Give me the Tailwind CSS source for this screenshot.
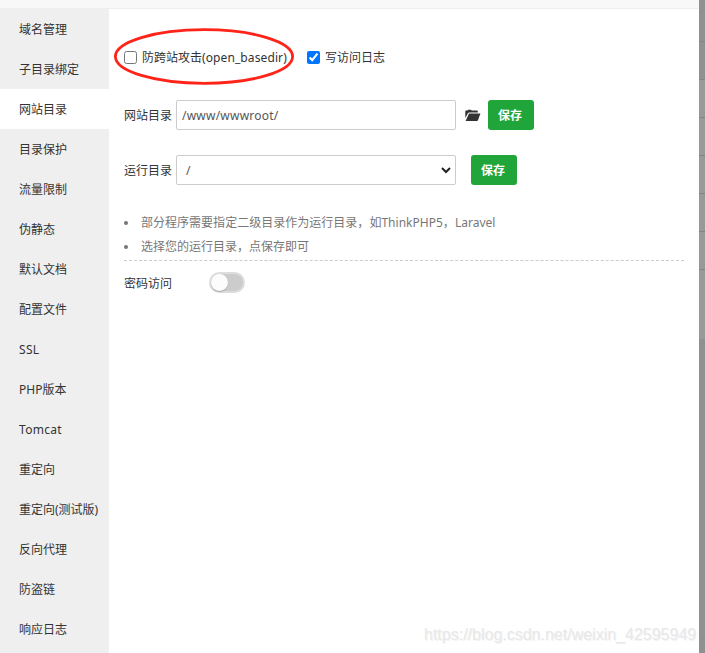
<!DOCTYPE html>
<html lang="zh-CN">
<head>
<meta charset="utf-8">
<title>网站目录</title>
<script src="https://cdn.jsdelivr.net/npm/@tailwindcss/browser@4"></script>
</head>
<body class="relative flex h-[653px] w-[705px] overflow-hidden bg-white font-['Noto_Sans','Noto_Sans_CJK_SC',sans-serif] text-xs text-[#333]">
<div class="flex h-full w-[699px] flex-col">
  <header class="h-[9px] shrink-0 border-b border-[#eee] bg-[#f8f8f8]"></header>
  <div class="flex min-h-0 flex-1">
    <nav class="w-[109px] shrink-0 bg-[#efefef] leading-[42px] whitespace-nowrap">
      <p class="h-10 pl-[19px]">域名管理</p>
      <p class="h-10 pl-[19px]">子目录绑定</p>
      <p class="h-10 bg-white pl-[19px]">网站目录</p>
      <p class="h-10 pl-[19px]">目录保护</p>
      <p class="h-10 pl-[19px]">流量限制</p>
      <p class="h-10 pl-[19px]">伪静态</p>
      <p class="h-10 pl-[19px]">默认文档</p>
      <p class="h-10 pl-[19px]">配置文件</p>
      <p class="h-10 pl-[19px] tracking-[0.3px]">SSL</p>
      <p class="h-10 pl-[19px]">PHP版本</p>
      <p class="h-10 pl-[19px] tracking-[0.3px]">Tomcat</p>
      <p class="h-10 pl-[19px]">重定向</p>
      <p class="h-10 pl-[19px]">重定向(测试版)</p>
      <p class="h-10 pl-[19px]">反向代理</p>
      <p class="h-10 pl-[19px]">防盗链</p>
      <p class="h-10 pl-[19px]">响应日志</p>
    </nav>
    <main class="flex-1 pt-[33px] pr-[15px] pl-[15px]">
      <div class="flex h-[30px] items-center whitespace-nowrap">
        <label class="flex w-[183px] items-center gap-[5px]"><input type="checkbox" class="h-[13px] w-[13px]"><span class="pt-[2px]">防跨站攻击<span class="tracking-[0.1px]">(open_basedir)</span></span></label>
        <label class="flex items-center gap-[5px]"><input type="checkbox" checked class="h-[13px] w-[13px]"><span class="pt-[2px]">写访问日志</span></label>
      </div>
      <div class="mt-7 flex h-[30px] items-center">
        <span class="w-[52px] pt-[2px]">网站目录</span>
        <div class="h-[30px] w-[280px] rounded-[2px] border border-[#ccc] pl-[5px] leading-[30px] tracking-[0.22px] text-[#555]">/www/wwwroot/</div>
        <svg class="ml-[9px] h-[13px] w-4" viewBox="0 0 16 13" fill="#333"><path d="M0.3 9V2.2Q0.3 1.5 1 1.5H2.5L3 0.8H6L6.6 1.5H12Q12.8 1.5 12.8 2.5V3.4H4.2Q3.3 3.4 2.9 4.2Z"/><path d="M4 4.6H15.4L13 11.3Q12.7 12 11.8 12H0.6Z"/></svg>
        <button class="ml-[7px] h-[30px] w-[46px] rounded-[3px] bg-[#20a53a] pt-[2px] pr-[2px] font-bold text-white">保存</button>
      </div>
      <div class="mt-[25px] flex h-[30px] items-center">
        <span class="w-[52px] pt-[2px]">运行目录</span>
        <div class="flex h-[30px] w-[280px] items-center justify-between rounded-[2px] border border-[#ccc] pr-[4px] pl-[9px] text-[#555]"><span class="pt-[2px]">/</span><svg class="h-[7px] w-[10px]" viewBox="0 0 10 7" fill="none" stroke="#222" stroke-width="2"><path d="M1 1L5 5L9 1"/></svg></div>
        <button class="ml-[15px] h-[30px] w-[46px] rounded-[3px] bg-[#20a53a] pt-[2px] pr-[2px] font-bold text-white">保存</button>
      </div>
      <ul class="mt-[25px] h-[51px] border-b border-dashed border-[#ccc] text-[#777]">
        <li class="flex h-6 items-center"><i class="mt-px mr-[13px] h-1 w-1 rounded-full bg-[#777]"></i><span class="pt-[2px] tracking-[0.02px]">部分程序需要指定二级目录作为运行目录，如ThinkPHP5，Laravel</span></li>
        <li class="flex h-6 items-center"><i class="mt-px mr-[13px] h-1 w-1 rounded-full bg-[#777]"></i><span class="pt-[2px]">选择您的运行目录，点保存即可</span></li>
      </ul>
      <div class="mt-[11px] flex h-[21px] items-center">
        <span class="w-[85px] pt-[2px]">密码访问</span>
        <div class="h-[21px] w-9 rounded-full border-2 border-[#ddd] bg-[#ccc]"><div class="h-[17px] w-[17px] rounded-full bg-[#fcfcfc] shadow-[0_1px_1px_#aaa]"></div></div>
      </div>
    </main>
  </div>
</div>
<aside class="flex h-full w-[6px] flex-col bg-[#909090]">
  <div class="h-[42px] border-b border-[#848484]"></div>
  <div class="h-[38px] border-b border-[#848484]"></div>
  <div class="h-[38px] border-b border-[#848484] bg-[#999997]"></div>
  <div class="h-[38px] border-b border-[#848484] bg-[#999997]"></div>
  <div class="h-[38px] border-b border-[#848484] bg-[#999997]"></div>
  <div class="h-[38px] border-b border-[#848484] bg-[#999997]"></div>
  <div class="h-[38px] border-b border-[#848484] bg-[#999997]"></div>
  <div class="h-[69px] bg-[#999997]"></div>
</aside>
<svg class="absolute top-[27px] left-[113px] h-[59px] w-[182px]" viewBox="0 0 182 59" fill="none" stroke="#ff2318" stroke-width="2.8"><ellipse cx="91" cy="29.5" rx="88.6" ry="26.8"/></svg>
<div class="absolute top-[624px] left-[424px] font-['Liberation_Sans',sans-serif] text-base leading-[22px] whitespace-nowrap text-[#e8e8e8] [text-shadow:1px_1px_0_#f4f4f4]">https://blog.csdn.net/weixin_42595949</div>
</body>
</html>
